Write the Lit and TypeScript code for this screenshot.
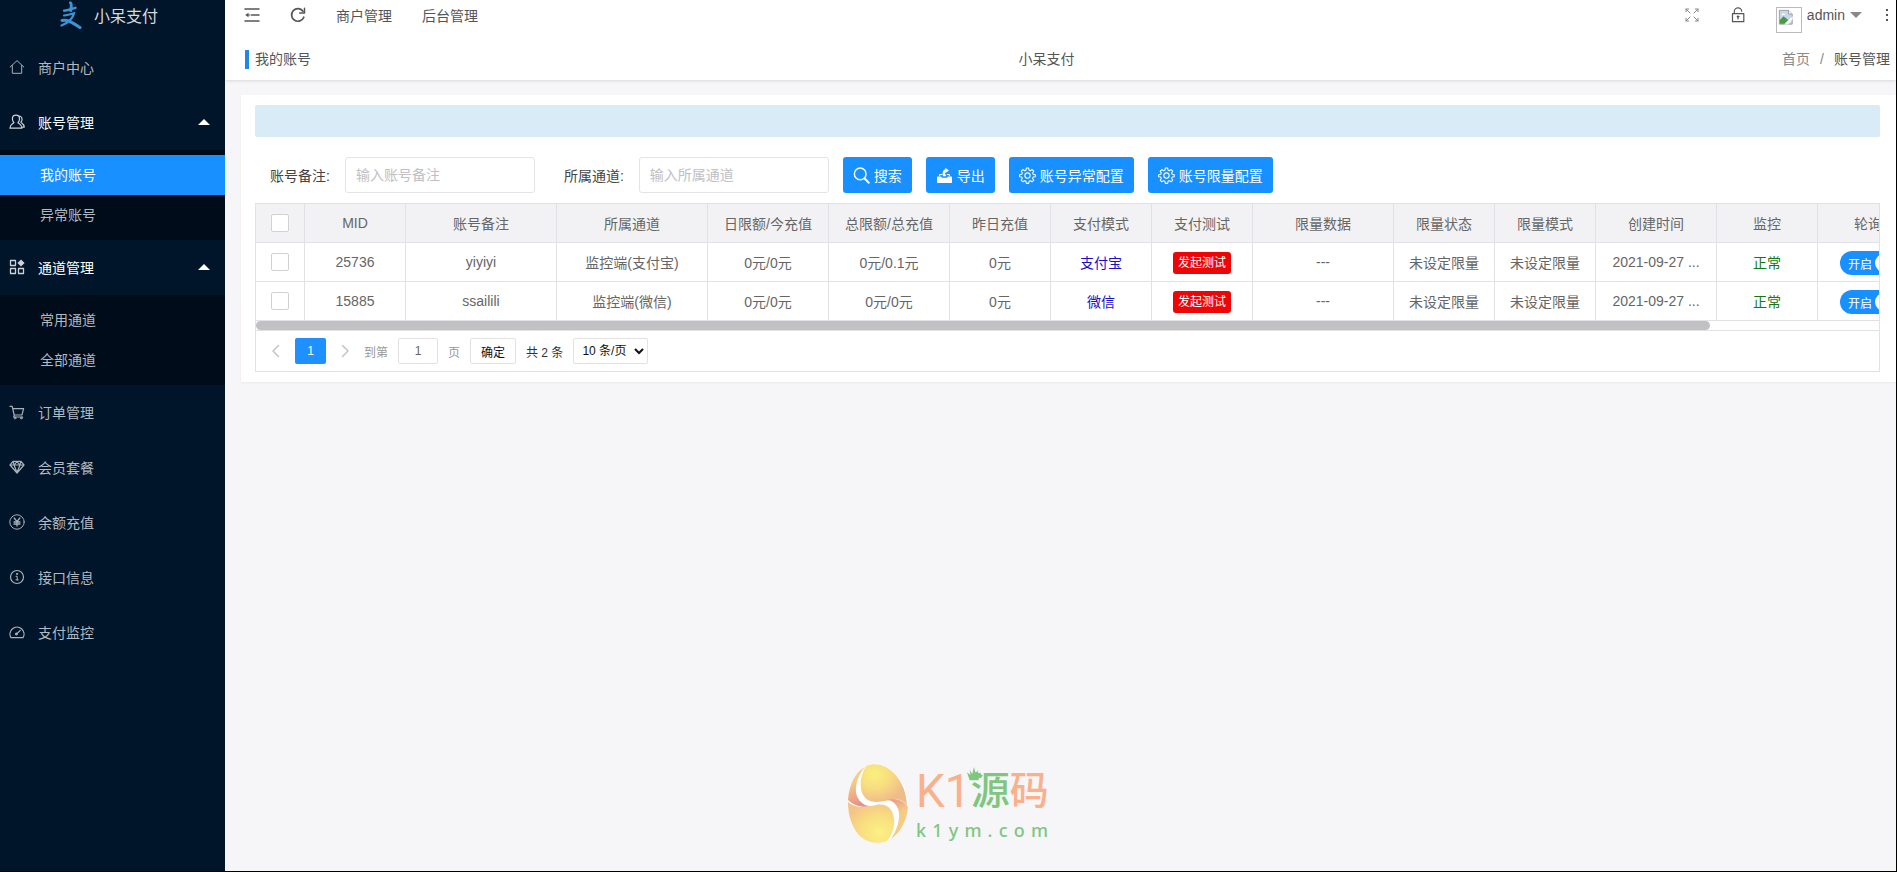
import { LitElement, html, css, svg, nothing } from "lit";
import { customElement, state } from "lit/decorators.js";

const line = (body: unknown, size = 16, width = 1) => html`<svg width=${size} height=${size} viewBox="0 0 16 16" fill="none" stroke="currentColor" stroke-width=${width} stroke-linejoin="round" stroke-linecap="round" aria-hidden="true">${body}</svg>`;

const icons: Record<string, unknown> = {
  home: svg`<path d="M1.200 8 8 1.600l6.800 6.400M3.300 6.500v7.800h9.400V6.500"/>`,
  users: svg`<path d="M7 1.200c-2.300 0-3.600 1.600-3.600 3.700 0 1.600.7 2.900 1.500 3.600-.3 1.200-3.900 1.300-4 5.700h12c-.1-4.400-3.600-4.500-3.900-5.700.9-.7 1.500-2 1.500-3.600 0-2.100-1.200-3.700-3.500-3.700zM10.800 2c1.500.5 2.300 1.600 2.300 3.200 0 1.400-.6 2.400-1.300 3 .3 1 3.300 1.300 3.400 5h-1.500" stroke-width="1.200"/>`,
  grid: svg`<path d="M1.500 1.500h5v5h-5zM1.500 9.500h5v5h-5zM9.500 9.500h5v5h-5z" stroke-width="1.300"/><path d="M12 .4 15.600 4 12 7.600 8.400 4z" fill="currentColor" stroke="none"/>`,
  cart: svg`<path d="M1 2.300h2.200l2 8.700h7.700l1.700-6.300H4M5.300 11l-.6 2h9" stroke-width="1.200"/><circle cx="6" cy="14" r=".9"/><circle cx="12.300" cy="14" r=".9"/>`,
  gem: svg`<path d="M4 2.300h8L15 6l-7 8L1 6zM1 6h14M5 6l3 7.500L11 6M4 2.300 5.200 6 8 2.500 10.800 6 12 2.300" stroke-width="1.200"/>`,
  yen: svg`<circle cx="8" cy="8" r="7.200"/><path d="M5.200 4 8 7.700 10.800 4M8 7.700V12M5 8h6M5 10h6" stroke-width="1.300"/>`,
  info: svg`<circle cx="8" cy="8" r="6.500" stroke-width="1.200"/><path d="M7 7.300h1.200v3.500M7 10.900h2.300" /><circle cx="8" cy="4.900" r=".6" fill="currentColor"/>`,
  gauge: svg`<path d="M2 13.700a7 7 0 1 1 12 0zM7.500 10l3.800-3.600" stroke-width="1.200"/><circle cx="7.300" cy="10" r="1" fill="currentColor"/>`,
  fold: svg`<path d="M1 2h14M7.500 8H15M1 14h14" stroke-width="1.500"/><path d="M1.200 8 4.500 5.700v4.600z" fill="currentColor" stroke="none"/><path d="M4 8h2" />`,
  refresh: svg`<path d="M13.800 10.200A6.300 6.300 0 1 1 13 4.200" stroke-width="1.700"/><path d="M14.500 1.200v4.700H9.700" stroke-width="1.500"/>`,
  full: svg`<path d="M2 4.700V2h2.700M2 2l4 4M11.300 2H14v2.700M14 2l-4 4M2 11.300V14h2.700M2 14l4-4M14 11.300V14h-2.700M14 14l-4-4"/>`,
  lock: svg`<path d="M2.500 6.700h11.300v8H2.500zM4.300 6.500V4.800a3.700 3.700 0 0 1 7.400-.6M8 9.500v2.500" stroke-width="1.200"/><circle cx="8" cy="9.600" r=".8" fill="currentColor"/>`,
  search: svg`<circle cx="6.800" cy="6.500" r="5.500" stroke-width="1.300"/><path d="m11.200 11 3.500 3.700" stroke-width="2"/>`,
  export: svg`<path d="M1.500 9.500h3l.8 1h5.400l.8-1h3v5h-13z" fill="currentColor"/><path d="M3.500 8V7h2M12.500 8V7h-2" /><path d="M9.800 8.800H6.500c-.8-3.500 0-6 2.300-6.600V.6l3.400 2.700-3.400 2.600V4.300c-.9.5-.5 2.300 1 4.500z" fill="currentColor" stroke="none"/>`,
  gear: svg`<path d="m6.900 1-.4 2-1.200.5-1.700-1.100-1.500 1.500 1 1.700-.5 1.200-2 .4v1.900l2 .4.5 1.200-1 1.700 1.500 1.500 1.700-1 1.200.5.400 2h2.200l.4-2 1.200-.5 1.700 1 1.500-1.500-1.100-1.700.5-1.200 2-.4V7.200l-2-.4-.5-1.200 1.100-1.700-1.500-1.500-1.700 1.100L9.500 3l-.4-2z"/><circle cx="8" cy="8" r="2.500"/>`,
  prev: svg`<path d="M10.500 2.500 5 8l5.500 5.500" stroke-width="1.500"/>`,
  next: svg`<path d="M5.500 2.500 11 8l-5.500 5.500" stroke-width="1.500"/>`,
};

const icon = (name: string, size = 16) => line(icons[name], size);

interface MenuItem { icon: string; label: string; children?: string[] }

const menu: MenuItem[] = [
  { icon: "home", label: "商户中心" },
  { icon: "users", label: "账号管理", children: ["我的账号", "异常账号"] },
  { icon: "grid", label: "通道管理", children: ["常用通道", "全部通道"] },
  { icon: "cart", label: "订单管理" },
  { icon: "gem", label: "会员套餐" },
  { icon: "yen", label: "余额充值" },
  { icon: "info", label: "接口信息" },
  { icon: "gauge", label: "支付监控" },
];

const columns: [string, number][] = [
  ["MID", 101], ["账号备注", 151], ["所属通道", 151], ["日限额/今充值", 121], ["总限额/总充值", 121],
  ["昨日充值", 101], ["支付模式", 101], ["支付测试", 101], ["限量数据", 141], ["限量状态", 101],
  ["限量模式", 101], ["创建时间", 121], ["监控", 101], ["轮询", 101], ["", 151],
];

const rows = [
  { mid: "25736", note: "yiyiyi", channel: "监控端(支付宝)", day: "0元/0元", total: "0元/0.1元", mode: "支付宝" },
  { mid: "15885", note: "ssailili", channel: "监控端(微信)", day: "0元/0元", total: "0元/0元", mode: "微信" },
];

const font = css`
  :host { box-sizing: border-box; font-family: "Liberation Sans", "Noto Sans CJK SC", sans-serif; font-size: 14px; }
  * { box-sizing: border-box; }
  a { color: inherit; text-decoration: none; }
  button, input, select { font: inherit; }
  svg { display: block; flex: none; }
`;

@customElement("side-menu")
class SideMenu extends LitElement {
  @state() private current = "我的账号";

  static styles = [font, css`
    :host { display: block; background: #001529; color: #b3b9c0; }
    .brand { display: flex; justify-content: center; align-items: center; gap: 11px; height: 40px; padding: 0 8px 10px 0; color: #d5dade; font-size: 16px; }
    ul { list-style: none; margin: 0; padding: 0; }
    .item { display: flex; align-items: center; gap: 13px; height: 55px; padding: 0 15px 2px 9px; }
    .item.open { color: #fff; }
    .item svg { color: #a8b0b8; }
    .item.open svg { color: #ccd2d8; }
    .caret { margin-left: auto; border: 6px solid transparent; border-top: 0; border-bottom-color: #fff; }
    .sub { padding: 5px 0; background: #000c1a; }
    .sub a { display: flex; align-items: center; height: 40px; padding: 0 0 2px 40px; }
    .sub a.current { background: #1890ff; color: #fff; }
  `];

  render() {
    return html`
      <div class="brand">
        <svg width="24" height="28" viewBox="0 0 24 28" fill="none" stroke="#3a95d8" stroke-linecap="round" aria-hidden="true">
          <path d="M11.500 1.800c1.500 1.200.8 4 .2 7.700" stroke-width="3"/>
          <path d="M5 9.800c4.500-.2 8-1.800 11.500-3" stroke-width="2.400"/>
          <path d="M5 14.500c4-.3 7-1.500 10-2.200-1 4.700-5 9.200-12.500 12.200" stroke-width="2.200"/>
          <path d="M3 19.500c6-1.500 11 2.500 18 7" stroke-width="3"/>
        </svg>
        <span>小呆支付</span>
      </div>
      <ul>
        ${menu.map((m) => html`<li>
          <a class="item ${m.children ? "open" : ""}" href="#">${icon(m.icon)}<span>${m.label}</span>${m.children ? html`<span class="caret"></span>` : nothing}</a>
          ${m.children ? html`<div class="sub">${m.children.map((c) => html`<a href="#" class=${c === this.current ? "current" : ""} @click=${() => (this.current = c)}>${c}</a>`)}</div>` : nothing}
        </li>`)}
      </ul>`;
  }
}

@customElement("top-bar")
class TopBar extends LitElement {
  static styles = [font, css`
    :host { display: block; background: #fff; color: #555; box-shadow: 0 1px 3px rgba(0, 0, 0, .12); }
    nav { display: flex; align-items: center; justify-content: space-between; height: 40px; padding: 0 6px 10px 19px; }
    .tools, .user { display: flex; align-items: center; gap: 30px; }
    .account { display: flex; align-items: center; gap: 5px; height: 30px; }
    .avatar { width: 26px; height: 26px; margin-top: 9px; border: 1px solid #bbb; padding: 1px; }
    .caret { border: 6px solid transparent; border-top-color: #888; border-bottom: 0; }
    .more { display: flex; align-items: center; gap: 22px; }
    button { display: block; border: 0; padding: 0; background: none; color: inherit; }
    .dim { color: #888; }
    .crumbs { display: flex; justify-content: space-between; align-items: center; height: 40px; padding: 0 6px 1px 20px; line-height: 19px; }
    .here { border-left: 4px solid #1e88e5; padding-left: 6px; }
    .path { display: flex; align-items: center; gap: 10px; }
    .path a, .path i { font-style: normal; color: #888; }
  `];

  render() {
    return html`
      <nav>
        <div class="tools">
          <button aria-label="折叠菜单">${icon("fold")}</button>
          <button aria-label="刷新">${icon("refresh")}</button>
          <a href="#">商户管理</a>
          <a href="#">后台管理</a>
        </div>
        <div class="user">
          <button class="dim" aria-label="全屏">${icon("full")}</button>
          <button aria-label="锁屏">${icon("lock")}</button>
          <div class="more">
            <a class="account" href="#">
              <svg class="avatar" viewBox="0 0 24 24" aria-hidden="true">
                <path d="M1.500 1.500h10l4 4v11h-14z" fill="#c5d8f0" stroke="#999"/>
                <path d="M11.500 1.500v4h4" fill="#fff" stroke="#999"/>
                <path d="M2 16v-4l4-4 4 3 1 1-4 4z" fill="#4c9a3f"/>
                <path d="M4 6.500c0-2 4-2 4 0z" fill="#fff"/>
                <path d="m7 17 9-9v3l-5 6z" fill="#fff"/>
              </svg>
              <span>admin</span><span class="caret"></span>
            </a>
            <button aria-label="更多"><svg width="6" height="14" viewBox="0 0 6 14" fill="#555" aria-hidden="true"><path d="M2 1h2v2H2zM2 6h2v2H2zM2 11h2v2H2z"/></svg></button>
          </div>
        </div>
      </nav>
      <div class="crumbs">
        <span class="here">我的账号</span>
        <span>小呆支付</span>
        <span class="path"><a href="#">首页</a><i>/</i><span>账号管理</span></span>
      </div>`;
  }
}

@customElement("account-table")
class AccountTable extends LitElement {
  static styles = [font, css`
    :host { display: block; border: 1px solid #e2e2e6; color: #666; }
    .view { overflow-x: auto; scrollbar-width: none; }
    table { border-collapse: separate; border-spacing: 0; table-layout: fixed; width: 1814px; }
    th, td { height: 39px; padding: 0 15px; border-right: 1px solid #e2e2e6; border-bottom: 1px solid #e2e2e6; font-weight: 400; text-align: center; white-space: nowrap; overflow: hidden; text-overflow: ellipsis; }
    th { background: #f2f2f4; }
    .pick { width: 49px; }
    input[type="checkbox"] { display: block; appearance: none; width: 18px; height: 18px; margin: 0 auto; border: 1px solid #d2d2d2; border-radius: 2px; background: #fff; }
    .mode { color: #1a0dcc; }
    .ok { color: #127a12; }
    .test { display: block; width: 58px; height: 22px; margin: 0 auto; border: 0; border-radius: 3px; padding: 0; background: #ee0606; color: #fff; font-size: 12px; line-height: 22px; }
    .switch { display: flex; align-items: center; justify-content: space-between; width: 56px; height: 24px; margin: 0 auto; border: 0; border-radius: 12px; padding: 0 3px 0 8px; background: #1890ff; color: #fff; font-size: 12px; }
    .knob { width: 18px; height: 18px; border-radius: 50%; background: #fff; }
    td .test, td .switch { margin-top: 2px; }
    .track { height: 10px; border-bottom: 1px solid #e2e2e6; }
    .thumb { height: 9px; border-radius: 5px; background: #c1c0c2; }
    .pages { display: flex; align-items: center; gap: 10px; height: 40px; padding-left: 11px; font-size: 12px; color: #999; }
    .pages button, .pages input, .pages select { height: 26px; border: 1px solid #e2e2e2; border-radius: 2px; background: #fff; padding: 0; }
    .pages .arrow { display: grid; place-items: center; width: 18px; border: 0; color: #c4c4c4; }
    .pages .num { width: 31px; border: 0; background: #1e90ff; color: #fff; }
    .pages input { width: 40px; text-align: center; color: #666; }
    .pages .go { width: 46px; color: #111; }
    .pages select { width: 75px; padding: 0 4px; color: #111; }
    .count { color: #333; }
  `];

  render() {
    const total = columns.reduce((sum, c) => sum + c[1], 49);
    return html`
      <div class="view">
        <table>
          <thead><tr>
            <th class="pick"><input type="checkbox" aria-label="全选"></th>
            ${columns.map(([name, w]) => html`<th style="width:${w}px">${name}</th>`)}
          </tr></thead>
          <tbody>${rows.map((r) => html`<tr>
            <td class="pick"><input type="checkbox" aria-label=${r.mid}></td>
            <td>${r.mid}</td><td>${r.note}</td><td>${r.channel}</td><td>${r.day}</td><td>${r.total}</td><td>0元</td>
            <td class="mode">${r.mode}</td>
            <td><button class="test">发起测试</button></td>
            <td>---</td><td>未设定限量</td><td>未设定限量</td><td>2021-09-27 ...</td>
            <td class="ok">正常</td>
            <td><button class="switch" role="switch" aria-checked="true">开启<span class="knob"></span></button></td>
            <td></td>
          </tr>`)}</tbody>
        </table>
      </div>
      <div class="track"><div class="thumb" style="width:${(1625 / total) * 100}%"></div></div>
      <div class="pages">
        <button class="arrow" aria-label="上一页">${icon("prev")}</button>
        <button class="num">1</button>
        <button class="arrow" aria-label="下一页">${icon("next")}</button>
        <label for="page">到第</label><input id="page" value="1"><span>页</span>
        <button class="go">确定</button>
        <span class="count">共 2 条</span>
        <select aria-label="每页条数"><option>10 条/页</option></select>
      </div>`;
  }
}

@customElement("site-mark")
class SiteMark extends LitElement {
  static styles = [font, css`
    :host { display: flex; justify-content: center; gap: 8px; pointer-events: none; }
    .words { display: flex; flex-direction: column; width: 132px; }
    .name { display: flex; align-items: center; justify-content: space-between; height: 56px; color: #fbb08c; font-size: 39px; font-weight: 500; line-height: 56px; }
    .name span:first-child { font-family: Roboto, sans-serif; font-size: 46px; font-weight: 400; }
    .green { position: relative; color: #7fc67f; }
    .crown { position: absolute; left: -4px; top: 4px; }
    .site { display: flex; justify-content: space-between; color: #7fc67f; font: 500 18px/22px "Noto Sans", sans-serif; }
  `];

  render() {
    return html`
      <svg width="60" height="80" viewBox="0 0 60 80" aria-hidden="true">
        <defs>
          <radialGradient id="a" cx=".3" cy=".25" r=".7"><stop offset="0" stop-color="#faf07e"/><stop offset=".5" stop-color="#f8dc80"/><stop offset="1" stop-color="#f0bb8a"/></radialGradient>
          <radialGradient id="b" cx=".68" cy=".75" r=".8"><stop offset="0" stop-color="#fbf184"/><stop offset=".5" stop-color="#f9de80"/><stop offset="1" stop-color="#f3c388"/></radialGradient>
          <linearGradient id="c" x1="0" y1="0" x2=".3" y2="1"><stop offset=".4" stop-color="#f5cc84"/><stop offset="1" stop-color="#e8908a"/></linearGradient>
          <linearGradient id="d" x1="0" y1="0" x2=".3" y2="1"><stop offset="0" stop-color="#e8908a"/><stop offset=".5" stop-color="#f5cc84"/></linearGradient>
        </defs>
        <path d="M18 3C36-5 60 14 60 42 59 62 50 74 41 77 30 82 18 79 10 70 3 61 0 50 0 40 0 24 6 9 18 3z" fill="#fff"/>
        <path d="M18 3C36-5 58 14 59 42 54 36 49 36 42 37 32 39 25 40 20 37 10 31 11 14 18 3z" fill="url(#a)"/>
        <path d="M17 4C8 14 4 31 13 39 17 43 20 43 25 43 14 45 6 43 0 37 1 22 7 9 17 4z" fill="url(#c)"/>
        <path d="M0 39C7 45 16 45 28 42 39 40 45 46 46 56 47 64 44 72 39 78 28 82 17 79 10 71 4 63 0 53 0 39z" fill="url(#b)"/>
        <path d="M38 37C48 35 56 37 60 44 59 58 52 70 43 76 51 64 54 50 48 42 45 38 42 37 38 37z" fill="url(#d)"/>
      </svg>
      <div class="words">
        <div class="name"><span>K1</span><span class="green"><svg class="crown" width="14" height="14" viewBox="0 0 16 16" fill="#7fc67f" aria-hidden="true"><path d="m0 6 4 3-1-6 3 5L8 0l2 8 3-5-1 6 4-3-3 9H3z"/></svg>源</span><span>码</span></div>
        <div class="site">${[..."k1ym.com"].map((ch) => html`<span>${ch}</span>`)}</div>
      </div>`;
  }
}

@customElement("app-root")
class AppRoot extends LitElement {
  static styles = [font, css`
    :host { display: grid; grid-template-columns: 225px minmax(0, 1fr); position: relative; min-height: 100vh; border-right: 1px solid #000; border-bottom: 1px solid #000; background: #f6f6f8; color: #555; }
    main { display: flex; flex-direction: column; gap: 15px; min-width: 0; }
    .card { margin-left: 16px; padding: 10px 16px 10px 14px; background: #fff; box-shadow: 0 1px 2px rgba(0, 0, 0, .05); }
    .notice { height: 32px; border-radius: 2px; background: #d9ebf6; }
    form { display: flex; flex-wrap: wrap; align-items: center; gap: 14px; padding: 20px 15px 10px; }
    .field { display: flex; align-items: center; gap: 15px; color: #444; }
    .field + .field { margin-left: 15px; }
    input { width: 190px; height: 36px; border: 1px solid #e4e4e6; border-radius: 3px; padding: 0 10px; color: #444; }
    input::placeholder { color: #c0c0c4; }
    button { display: flex; align-items: center; gap: 4px; height: 36px; border: 0; border-radius: 3px; padding: 0 10px; background: #1890ff; color: #fff; }
    site-mark { position: absolute; left: 0; right: 0; bottom: 28px; }
  `];

  render() {
    return html`
      <side-menu></side-menu>
      <main>
        <top-bar></top-bar>
        <section class="card">
          <div class="notice"></div>
          <form @submit=${(e: Event) => e.preventDefault()}>
            <div class="field"><label for="note">账号备注:</label><input id="note" placeholder="输入账号备注"></div>
            <div class="field"><label for="channel">所属通道:</label><input id="channel" placeholder="输入所属通道"></div>
            <button>${icon("search", 17)}搜索</button>
            <button type="button">${icon("export", 17)}导出</button>
            <button type="button">${icon("gear", 17)}账号异常配置</button>
            <button type="button">${icon("gear", 17)}账号限量配置</button>
          </form>
          <account-table></account-table>
        </section>
      </main>
      <site-mark></site-mark>`;
  }
}
